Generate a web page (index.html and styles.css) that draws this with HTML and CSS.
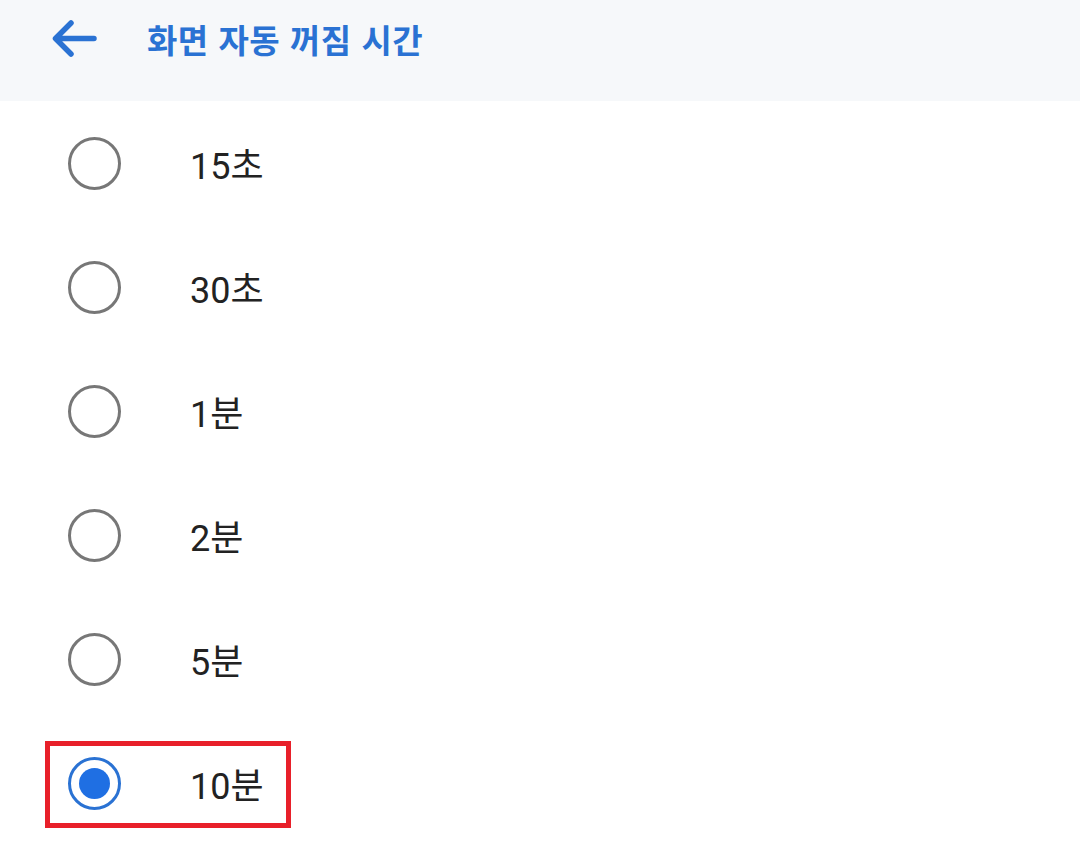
FILE: index.html
```html
<!DOCTYPE html>
<html lang="ko">

<head>
    <meta charset="UTF-8">
    <meta name="viewport" content="width=device-width, initial-scale=1.0">
    <title>화면 자동 꺼짐 시간</title>
    <link rel="stylesheet" href="styles.css">
</head>

<body>
    <div class="header">
        <svg class="back" width="48" height="42" viewBox="0 0 48 42">
            <path d="M44 20.5 H7 M21 5 L5.5 20.5 L21 36" fill="none" stroke="#2a72d3" stroke-width="5.5" stroke-linecap="round" stroke-linejoin="round"/>
        </svg>
        <h1>화면 자동 꺼짐 시간</h1>
    </div>

    <ul class="options">
        <li class="option"><span class="radio"></span><span class="label">15초</span></li>
        <li class="option"><span class="radio"></span><span class="label">30초</span></li>
        <li class="option"><span class="radio"></span><span class="label">1분</span></li>
        <li class="option"><span class="radio"></span><span class="label">2분</span></li>
        <li class="option"><span class="radio"></span><span class="label">5분</span></li>
        <li class="option selected"><span class="radio"></span><span class="label">10분</span>
            <span class="highlight"></span>
        </li>
    </ul>
</body>

</html>
```

FILE: styles.css
```css
body {
    margin: 0;
    background-color: #fff;
    font-family: Roboto, "Noto Sans CJK KR", sans-serif;
    overflow: hidden;
}

.header {
    height: 101px;
    background-color: #f6f8fa;
    display: flex;
    align-items: center;
    padding: 0 0 23px 50px;
    box-sizing: border-box;
}

.back {
    display: block;
}

.header h1 {
    margin: 0 0 0 49px;
    font-family: "Noto Sans CJK KR", sans-serif;
    font-size: 33px;
    font-weight: 700;
    color: #2a72d3;
    letter-spacing: 0.5px;
}

.options {
    list-style: none;
    margin: 0;
    padding: 0;
}

.option {
    position: relative;
    height: 124px;
    display: flex;
    align-items: center;
    padding-left: 68px;
}

.radio {
    width: 53px;
    height: 53px;
    box-sizing: border-box;
    border: 3px solid #777;
    border-radius: 50%;
    display: flex;
    align-items: center;
    justify-content: center;
}

.selected .radio {
    border-color: #2a72d3;
}

.selected .radio::after {
    content: "";
    width: 31px;
    height: 31px;
    border-radius: 50%;
    background-color: #1f6fe3;
}

.label {
    margin-left: 69px;
    font-size: 36px;
    color: #222;
}

.highlight {
    position: absolute;
    left: 45px;
    top: 20px;
    width: 246px;
    height: 87px;
    box-sizing: border-box;
    border: 5px solid #e8202a;
}
```
